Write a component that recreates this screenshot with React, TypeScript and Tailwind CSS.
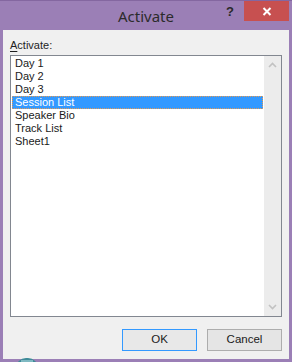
import React from "react";

const items = ["Day 1", "Day 2", "Day 3", "Session List", "Speaker Bio", "Track List", "Sheet1"];

export default function App() {
  return (
    <div
      className="relative w-[292px] h-[362px] bg-[#9b7fb6] flex flex-col overflow-hidden border-t border-[#8467a0]"
      style={{ fontFamily: '"Liberation Sans", Arial, sans-serif' }}
    >
      {/* Title bar */}
      <div className="relative h-[29px] shrink-0 flex items-center justify-center">
        <span
          className="text-[15px] text-[#2b2b2b] leading-none mt-[1px]"
          style={{ fontFamily: '"Noto Sans", "Open Sans", sans-serif' }}
        >
          Activate
        </span>
        <span className="absolute left-[226px] top-[4px] text-[13px] font-bold text-[#2a2a2a] leading-none">?</span>
        <div className="absolute left-[244px] top-0 w-[45px] h-[20px] bg-[#c75050] flex items-center justify-center">
          <svg width="10" height="9" viewBox="0 0 10 9">
            <path d="M1.5 1 L8.5 8 M8.5 1 L1.5 8" stroke="#ffffff" strokeWidth="2" />
          </svg>
        </div>
      </div>

      {/* Body */}
      <div className="mx-[3px] h-[329px] shrink-0 bg-[#f0f0f0] flex flex-col px-[7px] pt-[8px]">
        <div className="h-[15px] text-[11px] leading-[15px] text-[#1e1e1e]">
          <span className="underline underline-offset-[2px]">A</span>ctivate:
        </div>
        <div className="mt-[2px] h-[262px] border border-[#828790] bg-white flex p-[1px] pr-0">
          <div className="flex-1 flex flex-col">
            {items.map((it) => (
              <div
                key={it}
                className={
                  it === "Session List"
                    ? "h-[13px] bg-[#3399ff] text-white text-[11px] leading-[13px] pl-[3px] outline outline-1 outline-dotted outline-[#e39a55] -outline-offset-1"
                    : "h-[13px] text-[#1a1a1a] text-[11px] leading-[13px] pl-[3px]"
                }
              >
                {it}
              </div>
            ))}
          </div>
          <div className="w-[17px] ml-[1px] -mt-[1px] -mb-[1px] bg-[#ececec] flex flex-col items-center justify-between py-[6px]">
            <svg width="9" height="6" viewBox="0 0 9 6">
              <path d="M1 5 L4.5 1.5 L8 5" stroke="#c2c2c2" strokeWidth="1.6" fill="none" />
            </svg>
            <svg width="9" height="6" viewBox="0 0 9 6">
              <path d="M1 1 L4.5 4.5 L8 1" stroke="#c2c2c2" strokeWidth="1.6" fill="none" />
            </svg>
          </div>
        </div>
        <div className="mt-[12px] flex justify-end gap-[10px]">
          <button className="w-[75px] h-[22px] border border-[#3399ff] bg-[#e8e8e8] text-[11.5px] text-[#1a1a1a] leading-none">
            OK
          </button>
          <button className="w-[75px] h-[22px] border border-[#adadad] bg-[#e5e5e5] text-[11.5px] text-[#1a1a1a] leading-none">
            Cancel
          </button>
        </div>
      </div>

      {/* teal icon peeking at the bottom */}
      <div className="absolute left-[16px] top-[357px] w-[22px] h-[10px] rounded-t-full bg-[#3f8b98] overflow-hidden">
        <div className="mx-auto mt-[2px] w-[12px] h-[2px] bg-[#7fb9c2]" />
      </div>
    </div>
  );
}
